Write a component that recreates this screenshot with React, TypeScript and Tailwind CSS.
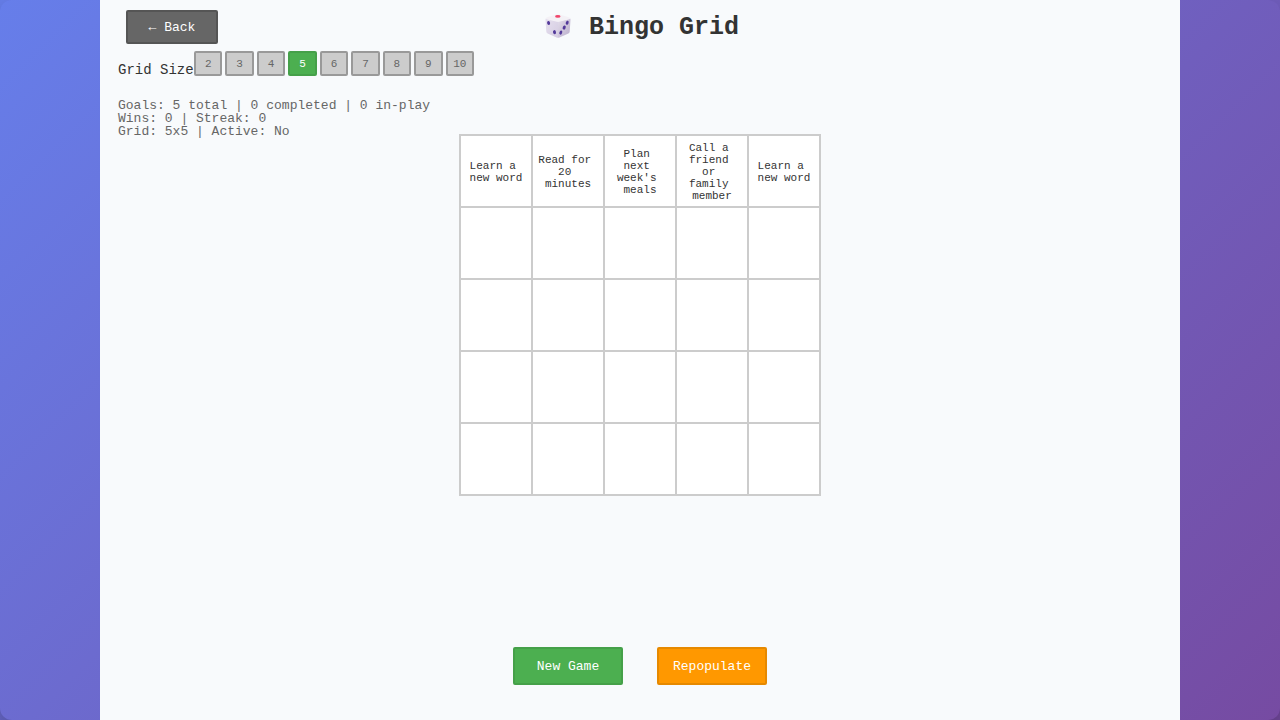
import { useState } from "react";

const sizes = [2, 3, 4, 5, 6, 7, 8, 9, 10];

// Each goal is stored as wrapped lines; the spaces left by the wrapping are kept.
const goals: string[][] = [
  ["Learn a ", "new word"],
  ["Read for ", "20 ", "minutes"],
  ["Plan ", "next ", "week's ", "meals"],
  ["Call a ", "friend ", "or ", "family ", "member"],
  ["Learn a ", "new word"],
];

function Dice() {
  return (
    <svg className="mb-1 h-6 w-[26px]" viewBox="0 0 26 24" aria-hidden="true">
      <defs>
        <linearGradient id="left" x1="0" y1="0" x2="1" y2="1">
          <stop offset="0" stopColor="#e6e0ee" />
          <stop offset="1" stopColor="#d5cce2" />
        </linearGradient>
        <linearGradient id="right" x1="0" y1="0" x2="1" y2="1">
          <stop offset="0" stopColor="#e4deeb" />
          <stop offset="1" stopColor="#b9adcb" />
        </linearGradient>
      </defs>
      <path d="M.8 4.4 13 7.4V23.8Q12 23.8 11 23.3L2.6 19.4Q1.4 18.8 1.3 17.4L.5 6Q.4 5 .8 4.4Z" fill="url(#left)" />
      <path d="M25.2 4.4 13 7.4V23.8Q14 23.8 15 23.3L23.4 19.4Q24.6 18.8 24.7 17.4L25.5 6Q25.6 5 25.2 4.4Z" fill="url(#right)" />
      <path d="M.8 4.4Q1.3 3.6 2.8 3.1L11.5.6Q13 .2 14.5.6L23.2 3.1Q24.7 3.6 25.2 4.4 24.4 5.3 22.4 5.8L15 7.5Q13 8 11 7.5L3.6 5.8Q1.6 5.3.8 4.4Z" fill="#f4f1f6" />
      <ellipse cx="12.8" cy="2.4" rx="2.7" ry="1.4" fill="#f0466b" />
      <g fill="#53399a">
        <ellipse cx="3.6" cy="9" rx="1.5" ry="2" transform="rotate(-12 3.6 9)" />
        <ellipse cx="9.5" cy="18.2" rx="1.5" ry="2.1" transform="rotate(-12 9.5 18.2)" />
        <ellipse cx="22.2" cy="8.8" rx="1.4" ry="2.1" transform="rotate(18 22.2 8.8)" />
        <ellipse cx="19.2" cy="13.6" rx="1.5" ry="2.1" transform="rotate(18 19.2 13.6)" />
        <ellipse cx="15.8" cy="18.6" rx="1.4" ry="2.1" transform="rotate(18 15.8 18.6)" />
      </g>
    </svg>
  );
}

export default function App() {
  const [size, setSize] = useState(5);
  const cells = Array.from({ length: 25 }, (_, i) => goals[i] ?? []);

  return (
    <div className="min-h-screen bg-[linear-gradient(135deg,#667eea_0%,#764ba2_100%)] font-['Courier_New','Liberation_Mono',monospace]">
      <div className="flex min-h-screen justify-center overflow-hidden rounded-xl shadow-[0_20px_40px_rgba(0,0,0,0.3)]">
        <main className="flex w-full max-w-[1080px] flex-col bg-[#f8fafc]">
          <header className="grid grid-cols-3 items-start px-[26px] pt-[10px]">
            <button
              type="button"
              className="h-[34px] w-[92px] justify-self-start rounded-[2px] border-2 border-[#555] bg-[#666] pt-0.5 text-[13px] text-white"
            >
              ← Back
            </button>
            <h1 className="flex h-[34px] items-center justify-center gap-[18px] pt-0.5 pl-1 text-[25px] font-bold whitespace-nowrap text-[#333]">
              <Dice />
              Bingo Grid
            </h1>
          </header>

          <section className="px-[18px] pt-[7px]">
            <div className="flex items-start">
              <span id="grid-size" className="w-[76px] pt-[9px] text-[14px] leading-5 whitespace-nowrap text-[#333]">
                Grid Size:
              </span>
              <div role="group" aria-labelledby="grid-size" className="grid w-[280px] grid-cols-9 gap-[3px]">
                {sizes.map((n) => (
                  <button
                    key={n}
                    type="button"
                    aria-pressed={n === size}
                    onClick={() => setSize(n)}
                    className={
                      n === size
                        ? "h-[25px] rounded-[2px] border-2 border-[#45a049] bg-[#4caf50] pt-0.5 text-[11px] text-white"
                        : "h-[25px] rounded-[2px] border-2 border-[#999] bg-[#ccc] pt-0.5 text-[11px] text-[#666]"
                    }
                  >
                    {n}
                  </button>
                ))}
              </div>
            </div>
            <div className="pt-[19px] text-[13px] leading-[13px] text-[#666]">
              <p>Goals: 5 total | 0 completed | 0 in-play</p>
              <p>Wins: 0 | Streak: 0</p>
              <p>Grid: 5x5 | Active: No</p>
            </div>
          </section>

          <div className="-mt-1 grid grid-cols-[repeat(5,72px)] self-center border border-[#ccc] bg-white">
            {cells.map((lines, i) => (
              <button
                key={i}
                type="button"
                aria-label={lines.length ? undefined : "Empty cell"}
                className="flex h-[72px] flex-col items-center justify-center border border-[#ccc] pt-0.5 text-[11px] leading-3 text-[#333]"
              >
                {lines.map((line) => (
                  <span key={line} className="whitespace-pre">
                    {line}
                  </span>
                ))}
              </button>
            ))}
          </div>

          <footer className="mt-auto flex justify-center gap-[34px] pb-[35px] text-[13px] text-white">
            <button type="button" className="h-[38px] w-[110px] rounded-[2px] border-2 border-[#45a049] bg-[#4caf50] pt-0.5">
              New Game
            </button>
            <button type="button" className="h-[38px] w-[110px] rounded-[2px] border-2 border-[#e68900] bg-[#ff9800] pt-0.5">
              Repopulate
            </button>
          </footer>
        </main>
      </div>
    </div>
  );
}
